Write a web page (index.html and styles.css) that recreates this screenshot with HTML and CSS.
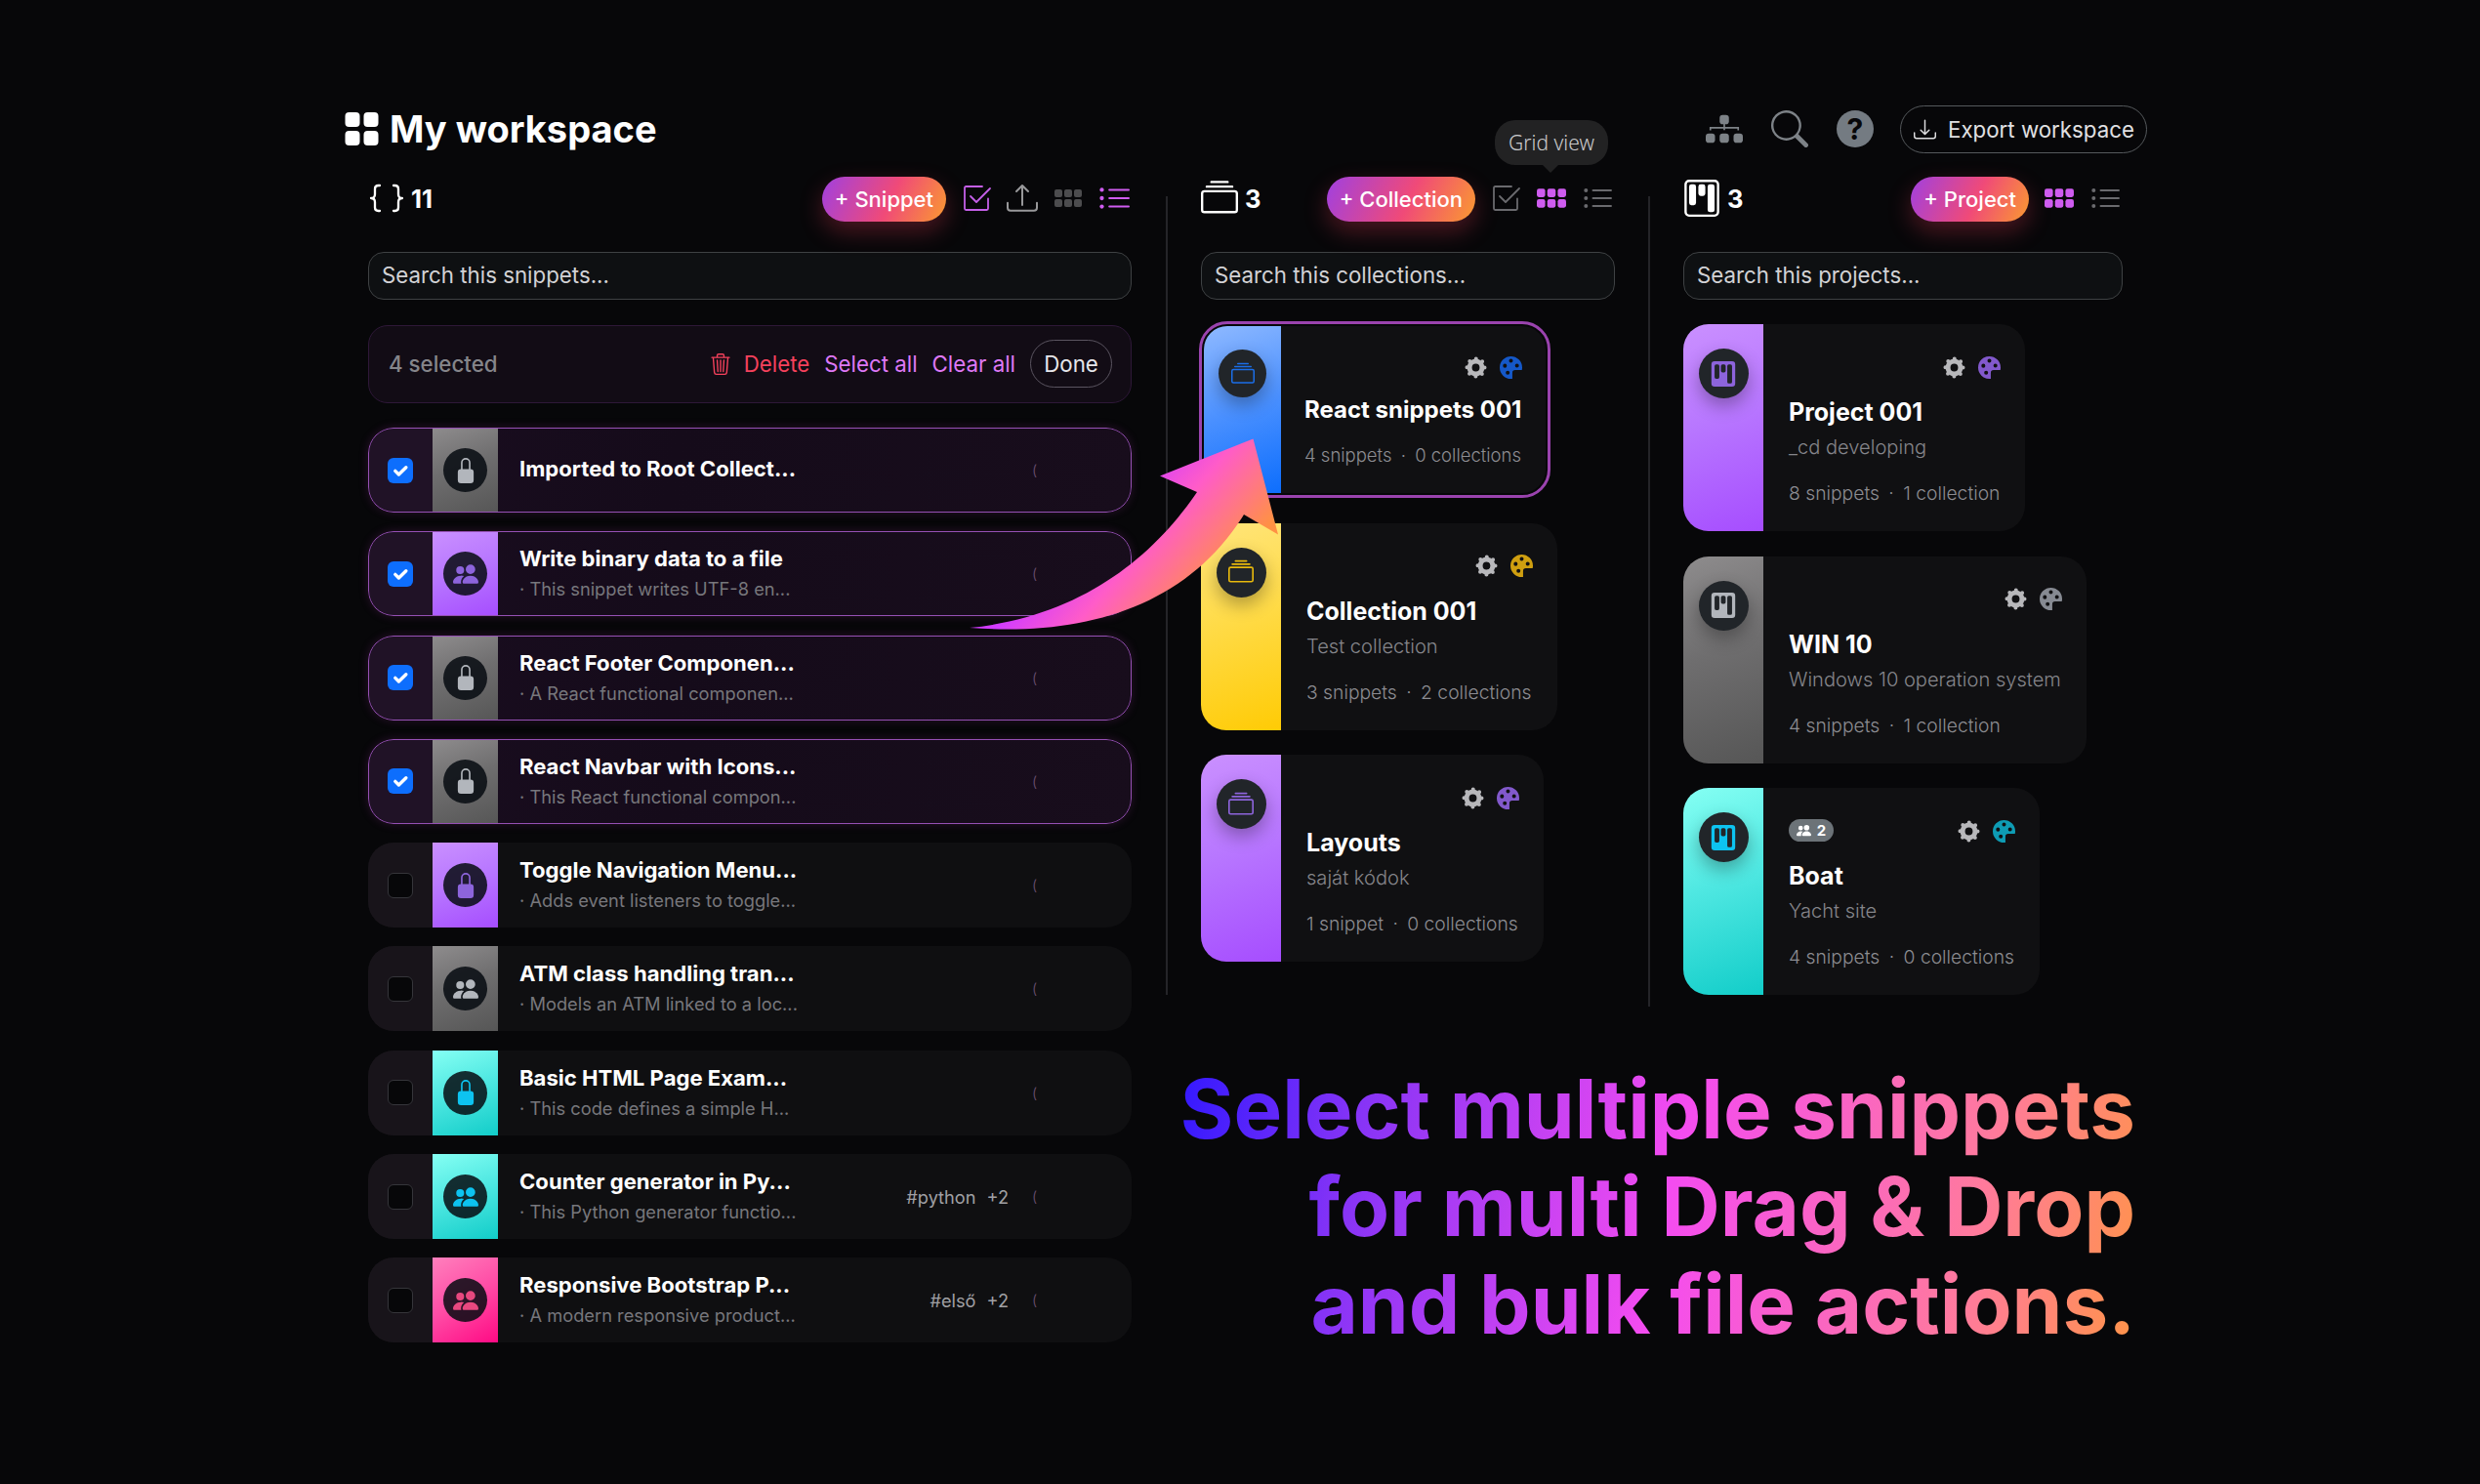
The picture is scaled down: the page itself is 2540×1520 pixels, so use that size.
FILE: index.html
```html
<!DOCTYPE html>
<html lang="en">
<head>
    <meta charset="UTF-8">
    <meta name="viewport" content="width=device-width, initial-scale=1.0">
    <title>My workspace</title>
    <link rel="stylesheet" href="styles.css">
</head>
<body>
    <!-- icon sprite -->
    <svg class="sprite" aria-hidden="true">
        <symbol id="i-people" viewBox="0 0 16 16"><path d="M7 14s-1 0-1-1 1-4 5-4 5 3 5 4-1 1-1 1zm4-6a3 3 0 1 0 0-6 3 3 0 0 0 0 6m-5.784 6A2.24 2.24 0 0 1 5 13c0-1.355.68-2.75 1.936-3.72A6.3 6.3 0 0 0 5 9c-4 0-5 3-5 4s1 1 1 1zM4.5 8a2.5 2.5 0 1 0 0-5 2.5 2.5 0 0 0 0 5"/></symbol>
        <symbol id="i-lock" viewBox="0 0 16 16"><path d="M8 1a2 2 0 0 1 2 2v4H6V3a2 2 0 0 1 2-2m3 6V3a3 3 0 0 0-6 0v4a2 2 0 0 0-2 2v5a2 2 0 0 0 2 2h6a2 2 0 0 0 2-2V9a2 2 0 0 0-2-2"/></symbol>
        <symbol id="i-palette" viewBox="0 0 16 16"><path fill-rule="evenodd" d="M8 0a8 8 0 1 0 0 16h1v-4.200a2 2 0 0 1 2-2h4.800Q16 9 16 8a8 8 0 0 0-8-8M8 1.800a1.400 1.400 0 1 1 0 2.800 1.400 1.400 0 0 1 0-2.800M3.700 5.300a1.400 1.400 0 1 1 0 2.800 1.400 1.400 0 0 1 0-2.800M12.300 5.200a1.400 1.400 0 1 1 0 2.800 1.400 1.400 0 0 1 0-2.800M5.700 10.200a1.400 1.400 0 1 1 0 2.800 1.400 1.400 0 0 1 0-2.800"/></symbol>
        <symbol id="i-gear" viewBox="0 0 24 24"><g fill="none" stroke="currentColor"><circle cx="12" cy="12" r="6.700" stroke-width="5.200"/><circle cx="12" cy="12" r="9.400" stroke-width="4.200" stroke-linecap="round" stroke-dasharray="0 7.383"/></g></symbol>
        <symbol id="i-kanban" viewBox="0 0 16 16"><path d="M13.500 1a1 1 0 0 1 1 1v12a1 1 0 0 1-1 1h-11a1 1 0 0 1-1-1V2a1 1 0 0 1 1-1zm-11-1a2 2 0 0 0-2 2v12a2 2 0 0 0 2 2h11a2 2 0 0 0 2-2V2a2 2 0 0 0-2-2z"/><path d="M6.500 3a1 1 0 0 1 1-1h1a1 1 0 0 1 1 1v3a1 1 0 0 1-1 1h-1a1 1 0 0 1-1-1zm-4 0a1 1 0 0 1 1-1h1a1 1 0 0 1 1 1v7a1 1 0 0 1-1 1h-1a1 1 0 0 1-1-1zm8 0a1 1 0 0 1 1-1h1a1 1 0 0 1 1 1v10a1 1 0 0 1-1 1h-1a1 1 0 0 1-1-1z"/></symbol>
        <symbol id="i-kanban-fill" viewBox="0 0 16 16"><path d="M2.500 0a2 2 0 0 0-2 2v12a2 2 0 0 0 2 2h11a2 2 0 0 0 2-2V2a2 2 0 0 0-2-2zm5 2h1a1 1 0 0 1 1 1v3a1 1 0 0 1-1 1h-1a1 1 0 0 1-1-1V3a1 1 0 0 1 1-1m-5 1a1 1 0 0 1 1-1h1a1 1 0 0 1 1 1v7a1 1 0 0 1-1 1h-1a1 1 0 0 1-1-1zm9-1h1a1 1 0 0 1 1 1v10a1 1 0 0 1-1 1h-1a1 1 0 0 1-1-1V3a1 1 0 0 1 1-1"/></symbol>
        <symbol id="i-collection" viewBox="0 0 16 16"><path d="M2.500 3.500a.5.5 0 0 1 0-1h11a.5.5 0 0 1 0 1zm2-2a.5.5 0 0 1 0-1h7a.5.5 0 0 1 0 1zM0 13a1.500 1.500 0 0 0 1.500 1.500h13A1.500 1.500 0 0 0 16 13V6a1.500 1.500 0 0 0-1.500-1.500h-13A1.500 1.500 0 0 0 0 6zm1.500.5A.5.5 0 0 1 1 13V6a.5.5 0 0 1 .5-.5h13a.5.5 0 0 1 .5.5v7a.5.5 0 0 1-.5.5z"/></symbol>
        <symbol id="i-check" viewBox="0 0 16 16"><g fill="none" stroke="currentColor" stroke-width=".9" stroke-linecap="round" stroke-linejoin="round"><path d="M11 2H2.700a.7.7 0 0 0-.7.700v10.600a.7.7 0 0 0 .7.700h10.600a.7.7 0 0 0 .7-.7V8.200"/><path d="m5 7 3 3 7-7"/></g></symbol>
        <symbol id="i-upload" viewBox="0 0 16 16"><path d="M.5 9.900a.5.5 0 0 1 .5.500v2.500a1 1 0 0 0 1 1h12a1 1 0 0 0 1-1v-2.500a.5.5 0 0 1 1 0v2.500a2 2 0 0 1-2 2H2a2 2 0 0 1-2-2v-2.500a.5.5 0 0 1 .5-.5"/><path d="M7.646 1.146a.5.5 0 0 1 .708 0l3 3a.5.5 0 0 1-.708.708L8.500 2.707V11.500a.5.5 0 0 1-1 0V2.707L5.354 4.854a.5.5 0 1 1-.708-.708z"/></symbol>
        <symbol id="i-download" viewBox="0 0 16 16"><path d="M.5 9.900a.5.5 0 0 1 .5.500v2.500a1 1 0 0 0 1 1h12a1 1 0 0 0 1-1v-2.500a.5.5 0 0 1 1 0v2.500a2 2 0 0 1-2 2H2a2 2 0 0 1-2-2v-2.500a.5.5 0 0 1 .5-.5"/><path d="M7.646 11.854a.5.5 0 0 0 .708 0l3-3a.5.5 0 0 0-.708-.708L8.500 10.293V1.500a.5.5 0 0 0-1 0v8.793L5.354 8.146a.5.5 0 1 0-.708.708z"/></symbol>
        <symbol id="i-grid" viewBox="0 0 32 32"><rect x="2" y="7" width="8" height="8" rx="2"/><rect x="12" y="7" width="8" height="8" rx="2"/><rect x="22" y="7" width="8" height="8" rx="2"/><rect x="2" y="17" width="8" height="8" rx="2"/><rect x="12" y="17" width="8" height="8" rx="2"/><rect x="22" y="17" width="8" height="8" rx="2"/></symbol>
        <symbol id="i-list" viewBox="0 0 32 32"><circle cx="4.300" cy="8" r="2"/><circle cx="4.300" cy="16" r="2"/><circle cx="4.300" cy="24" r="2"/><path d="M11.500 8H30M11.500 16H30M11.500 24H30" fill="none" stroke="currentColor" stroke-width="1.900" stroke-linecap="round"/></symbol>
        <symbol id="i-trash" viewBox="0 0 16 16"><path d="M6.500 1h3a.5.5 0 0 1 .5.500v1H6v-1a.5.5 0 0 1 .5-.5M11 2.500v-1A1.500 1.500 0 0 0 9.500 0h-3A1.500 1.500 0 0 0 5 1.500v1H1.500a.5.5 0 0 0 0 1h.538l.853 10.660A2 2 0 0 0 4.885 16h6.230a2 2 0 0 0 1.994-1.840l.853-10.660h.538a.5.5 0 0 0 0-1zm1.958 1-.846 10.580a1 1 0 0 1-.997.920h-6.230a1 1 0 0 1-.997-.920L3.042 3.500zm-7.487 1a.5.5 0 0 1 .528.470l.5 8.500a.5.5 0 0 1-.998.060L5 5.030a.5.5 0 0 1 .470-.530Zm5.058 0a.5.5 0 0 1 .470.530l-.5 8.500a.5.5 0 1 1-.998-.060l.5-8.500a.5.5 0 0 1 .528-.470M8 4.500a.5.5 0 0 1 .5.500v8.500a.5.5 0 0 1-1 0V5a.5.5 0 0 1 .5-.5"/></symbol>
        <symbol id="i-search" viewBox="0 0 16 16"><path d="M11.742 10.344a6.500 6.500 0 1 0-1.397 1.398h-.001q.044.060.098.115l3.850 3.850a1 1 0 0 0 1.415-1.414l-3.850-3.850a1 1 0 0 0-.115-.1zM12 6.500a5.500 5.500 0 1 1-11 0 5.500 5.500 0 0 1 11 0"/></symbol>
        <symbol id="i-diagram" viewBox="0 0 16 16"><rect x="6" y="2" width="4" height="4" rx="1.300"/><rect x="0" y="10" width="4" height="4" rx="1.300"/><rect x="6" y="10" width="4" height="4" rx="1.300"/><rect x="12" y="10" width="4" height="4" rx="1.300"/><path d="M8 5v3.500M2 8.600V7.500h12v1.100" fill="none" stroke="currentColor" stroke-width=".7"/></symbol>
        <symbol id="i-logo" viewBox="0 0 34 34"><rect width="15" height="15" rx="4"/><rect x="19" width="15" height="15" rx="4"/><rect y="19" width="15" height="15" rx="4"/><rect x="19" y="19" width="15" height="15" rx="4"/></symbol>
        <symbol id="i-braces" viewBox="0 0 36 30"><path d="M12 2H10.500Q7 2 7 5.500V11Q7 15 3 15Q7 15 7 19V24.500Q7 28 10.500 28H12M26 2h1.500Q31 2 31 5.500V11Q31 15 35 15Q31 15 31 19V24.500Q31 28 27.500 28H26" fill="none" stroke="currentColor" stroke-width="2.300" stroke-linecap="round" stroke-linejoin="round"/></symbol>
        <symbol id="i-tick" viewBox="0 0 20 20"><path d="m6 10.300 2.800 2.800 5.700-5.600" fill="none" stroke="currentColor" stroke-width="2.600" stroke-linecap="round" stroke-linejoin="round"/></symbol>
    </svg>

    <div class="workspace">
        <header class="header">
            <svg class="logo"><use href="#i-logo"/></svg>
            <h1>My workspace</h1>
            <div class="header-actions">
                <svg class="header-icon"><use href="#i-diagram"/></svg>
                <svg class="header-icon"><use href="#i-search"/></svg>
                <span class="help">?</span>
                <button class="export"><svg><use href="#i-download"/></svg>Export workspace</button>
            </div>
        </header>

        <div class="board">
            <section class="column snippets">
                <div class="toolbar">
                    <svg class="type-icon braces"><use href="#i-braces"/></svg>
                    <span class="count">11</span>
                    <button class="add">+ Snippet</button>
                    <svg class="tool active-line"><use href="#i-check"/></svg>
                    <svg class="tool light"><use href="#i-upload"/></svg>
                    <svg class="tool dim"><use href="#i-grid"/></svg>
                    <svg class="tool active"><use href="#i-list"/></svg>
                </div>
                <div class="search">Search this snippets...</div>

                <div class="bulk-bar">
                    <span class="selected-count">4 selected</span>
                    <span class="bulk-delete"><svg><use href="#i-trash"/></svg>Delete</span>
                    <span class="bulk-link">Select all</span>
                    <span class="bulk-link">Clear all</span>
                    <button class="done">Done</button>
                </div>

                <div class="rows">
                    <div class="row selected">
                        <div class="pick"><span class="box checked"><svg><use href="#i-tick"/></svg></span></div>
                        <div class="strip gray"><span class="badge"><svg><use href="#i-lock"/></svg></span></div>
                        <div class="info"><h3>Imported to Root Collect...</h3></div>
                        <div class="tags"></div><span class="edge">(</span>
                    </div>
                    <div class="row selected">
                        <div class="pick"><span class="box checked"><svg><use href="#i-tick"/></svg></span></div>
                        <div class="strip purple"><span class="badge"><svg><use href="#i-people"/></svg></span></div>
                        <div class="info"><h3>Write binary data to a file</h3><p>· This snippet writes UTF-8 en...</p></div>
                        <div class="tags"></div><span class="edge">(</span>
                    </div>
                    <div class="row selected">
                        <div class="pick"><span class="box checked"><svg><use href="#i-tick"/></svg></span></div>
                        <div class="strip gray"><span class="badge"><svg><use href="#i-lock"/></svg></span></div>
                        <div class="info"><h3>React Footer Componen...</h3><p>· A React functional componen...</p></div>
                        <div class="tags"></div><span class="edge">(</span>
                    </div>
                    <div class="row selected">
                        <div class="pick"><span class="box checked"><svg><use href="#i-tick"/></svg></span></div>
                        <div class="strip gray"><span class="badge"><svg><use href="#i-lock"/></svg></span></div>
                        <div class="info"><h3>React Navbar with Icons...</h3><p>· This React functional compon...</p></div>
                        <div class="tags"></div><span class="edge">(</span>
                    </div>
                    <div class="row">
                        <div class="pick"><span class="box"></span></div>
                        <div class="strip purple"><span class="badge"><svg><use href="#i-lock"/></svg></span></div>
                        <div class="info"><h3>Toggle Navigation Menu...</h3><p>· Adds event listeners to toggle...</p></div>
                        <div class="tags"></div><span class="edge">(</span>
                    </div>
                    <div class="row">
                        <div class="pick"><span class="box"></span></div>
                        <div class="strip gray"><span class="badge"><svg><use href="#i-people"/></svg></span></div>
                        <div class="info"><h3>ATM class handling tran...</h3><p>· Models an ATM linked to a loc...</p></div>
                        <div class="tags"></div><span class="edge">(</span>
                    </div>
                    <div class="row">
                        <div class="pick"><span class="box"></span></div>
                        <div class="strip cyan"><span class="badge"><svg><use href="#i-lock"/></svg></span></div>
                        <div class="info"><h3>Basic HTML Page Exam...</h3><p>· This code defines a simple H...</p></div>
                        <div class="tags"></div><span class="edge">(</span>
                    </div>
                    <div class="row">
                        <div class="pick"><span class="box"></span></div>
                        <div class="strip cyan"><span class="badge"><svg><use href="#i-people"/></svg></span></div>
                        <div class="info"><h3>Counter generator in Py...</h3><p>· This Python generator functio...</p></div>
                        <div class="tags"><span>#python</span><span>+2</span></div><span class="edge">(</span>
                    </div>
                    <div class="row">
                        <div class="pick"><span class="box"></span></div>
                        <div class="strip pink"><span class="badge"><svg><use href="#i-people"/></svg></span></div>
                        <div class="info"><h3>Responsive Bootstrap P...</h3><p>· A modern responsive product...</p></div>
                        <div class="tags"><span>#első</span><span>+2</span></div><span class="edge">(</span>
                    </div>
                </div>
            </section>

            <div class="divider"></div>

            <div class="side">
                <div class="side-columns">
                    <section class="column collections">
                        <div class="toolbar">
                            <svg class="type-icon"><use href="#i-collection"/></svg>
                            <span class="count">3</span>
                            <button class="add">+ Collection</button>
                            <svg class="tool"><use href="#i-check"/></svg>
                            <span class="tool-wrap">
                                <svg class="tool active"><use href="#i-grid"/></svg>
                                <span class="tooltip">Grid view</span>
                            </span>
                            <svg class="tool"><use href="#i-list"/></svg>
                        </div>
                        <div class="search">Search this collections...</div>

                        <div class="cards">
                            <article class="card drop-target">
                                <div class="strip blue"><span class="badge"><svg><use href="#i-collection"/></svg></span></div>
                                <div class="card-body">
                                    <div class="card-tools blue"><svg class="gear"><use href="#i-gear"/></svg><svg><use href="#i-palette"/></svg></div>
                                    <h2>React snippets 001</h2>
                                    <p class="meta">4 snippets <i>·</i> 0 collections</p>
                                </div>
                            </article>
                            <article class="card">
                                <div class="strip yellow"><span class="badge"><svg><use href="#i-collection"/></svg></span></div>
                                <div class="card-body">
                                    <div class="card-tools yellow"><svg class="gear"><use href="#i-gear"/></svg><svg><use href="#i-palette"/></svg></div>
                                    <h2>Collection 001</h2>
                                    <p class="desc">Test collection</p>
                                    <p class="meta">3 snippets <i>·</i> 2 collections</p>
                                </div>
                            </article>
                            <article class="card">
                                <div class="strip purple"><span class="badge"><svg><use href="#i-collection"/></svg></span></div>
                                <div class="card-body">
                                    <div class="card-tools purple"><svg class="gear"><use href="#i-gear"/></svg><svg><use href="#i-palette"/></svg></div>
                                    <h2>Layouts</h2>
                                    <p class="desc">saját kódok</p>
                                    <p class="meta">1 snippet <i>·</i> 0 collections</p>
                                </div>
                            </article>
                        </div>
                    </section>

                    <div class="divider tall"></div>

                    <section class="column projects">
                        <div class="toolbar">
                            <svg class="type-icon"><use href="#i-kanban"/></svg>
                            <span class="count">3</span>
                            <button class="add">+ Project</button>
                            <svg class="tool active"><use href="#i-grid"/></svg>
                            <svg class="tool"><use href="#i-list"/></svg>
                        </div>
                        <div class="search">Search this projects...</div>

                        <div class="cards">
                            <article class="card">
                                <div class="strip purple"><span class="badge"><svg><use href="#i-kanban-fill"/></svg></span></div>
                                <div class="card-body">
                                    <div class="card-tools purple"><svg class="gear"><use href="#i-gear"/></svg><svg><use href="#i-palette"/></svg></div>
                                    <h2>Project 001</h2>
                                    <p class="desc">_cd developing</p>
                                    <p class="meta">8 snippets <i>·</i> 1 collection</p>
                                </div>
                            </article>
                            <article class="card">
                                <div class="strip gray"><span class="badge"><svg><use href="#i-kanban-fill"/></svg></span></div>
                                <div class="card-body">
                                    <div class="card-tools gray"><svg class="gear"><use href="#i-gear"/></svg><svg><use href="#i-palette"/></svg></div>
                                    <h2>WIN 10</h2>
                                    <p class="desc">Windows 10 operation system</p>
                                    <p class="meta">4 snippets <i>·</i> 1 collection</p>
                                </div>
                            </article>
                            <article class="card">
                                <div class="strip cyan"><span class="badge"><svg><use href="#i-kanban-fill"/></svg></span></div>
                                <div class="card-body">
                                    <div class="card-tools cyan"><span class="members"><svg><use href="#i-people"/></svg>2</span><svg class="gear"><use href="#i-gear"/></svg><svg><use href="#i-palette"/></svg></div>
                                    <h2>Boat</h2>
                                    <p class="desc">Yacht site</p>
                                    <p class="meta">4 snippets <i>·</i> 0 collections</p>
                                </div>
                            </article>
                        </div>
                    </section>
                </div>

                <p class="headline">Select multiple snippets<br>for multi Drag &amp; Drop<br>and bulk file actions.</p>
            </div>
        </div>

        <!-- drag arrow, runs from the selected rows to the target collection -->
        <svg class="drag-arrow" viewBox="990 445 325 205">
            <defs>
                <linearGradient id="arrow-fill" gradientUnits="userSpaceOnUse" x1="1165" y1="478" x2="1271" y2="571">
                    <stop offset="0" stop-color="#d23cff"/>
                    <stop offset=".42" stop-color="#ff5cc8"/>
                    <stop offset="1" stop-color="#ff9144"/>
                </linearGradient>
            </defs>
            <path fill="url(#arrow-fill)" d="M1283.500 449.500 1188 487.500 1226 504C1180 572 1105 632 993 643C1110 652 1215 622 1274 527L1309 547.500Z"/>
        </svg>
    </div>
</body>
</html>
```

FILE: styles.css
```css
* {
    box-sizing: border-box;
}
body {
    margin: 0;
    background-color: #070709;
    color: #fff;
    font-family: Inter, sans-serif;
    font-size: 22px;
}
h1, h2, h3, p {
    margin: 0;
}
svg {
    fill: currentColor;
    flex-shrink: 0;
}
button {
    font-family: inherit;
    font-size: 22px;
    color: #fff;
    background: none;
    padding: 0;
    flex-shrink: 0;
    white-space: nowrap;
}
.sprite {
    display: none;
}
.workspace {
    position: relative;
    width: 2540px;
    height: 1520px;
    padding: 108px 341px 0 353px;
    overflow: hidden;
}

/* header */
.header {
    display: flex;
    align-items: center;
    height: 48px;
}
.logo {
    width: 35px;
    height: 34px;
}
h1 {
    margin-left: 11px;
    font-size: 38px;
    font-weight: 700;
    line-height: 48px;
}
.header-actions {
    display: flex;
    align-items: center;
    gap: 29px;
    margin-left: auto;
    color: #7d8287;
}
.header-icon {
    width: 38px;
    height: 38px;
}
.help {
    width: 38px;
    height: 38px;
    margin-right: -2px;
    border-radius: 50%;
    background-color: #747b82;
    color: #070709;
    font-size: 30px;
    font-weight: 700;
    line-height: 38px;
    text-align: center;
}
.export {
    display: flex;
    align-items: center;
    gap: 12px;
    width: 253px;
    height: 49px;
    padding-left: 13px;
    border: 1px solid #55595c;
    border-radius: 25px;
    color: #e0e0e2;
    font-size: 22.3px;
    font-weight: 380;
}
.export svg {
    width: 23px;
    height: 23px;
}

/* columns */
.board {
    display: flex;
    margin-top: 25px;
    padding-left: 24px;
}
.snippets {
    width: 782px;
}
.collections {
    width: 424px;
}
.projects {
    width: 450px;
}
.divider {
    width: 2px;
    height: 818px;
    margin: 20px 34px 0 35px;
    background-color: #242428;
}
.divider.tall {
    height: 830px;
    margin-left: 34px;
}
.side {
    display: flex;
    flex-direction: column;
    width: 957px;
}
.side-columns {
    display: flex;
    height: 905px;
}
.toolbar {
    display: flex;
    align-items: center;
    gap: 15px;
    height: 46px;
    padding-right: 2px;
}
.type-icon {
    width: 38px;
    height: 38px;
    margin-top: -3px;
}
.type-icon.braces {
    width: 36px;
    height: 30px;
}
.count {
    margin: -2px 0 0 -8px;
    font-size: 25.5px;
    font-weight: 700;
}
.snippets .count {
    margin-left: -7px;
}
.add {
    height: 46px;
    margin-left: auto;
    padding: 0 13px 1px;
    border: none;
    border-radius: 23px;
    background: linear-gradient(115deg, #a040e0 0%, #f04a78 55%, #fa9a30 100%);
    box-shadow: 0 10px 24px rgba(240, 60, 90, 0.3);
    font-size: 22px;
    font-weight: 450;
}
.tool {
    width: 32px;
    height: 32px;
    margin-top: -3px;
    color: #6a6a6e;
}
.tool.light {
    color: #98989a;
}
.tool.dim {
    color: #4c4c4e;
}
.tool.active-line {
    color: #c45fe8;
}
.tool.active {
    color: #cf5cf0;
    transform: scale(1.07);
}
.tool-wrap {
    position: relative;
    display: flex;
}
.tooltip {
    position: absolute;
    left: -42px;
    bottom: 50px;
    width: 116px;
    height: 46px;
    border-radius: 21px;
    background-color: #222223;
    color: #cacacc;
    font-family: "Noto Sans", sans-serif;
    font-size: 21px;
    font-weight: 350;
    line-height: 46px;
    text-align: center;
    white-space: nowrap;
}
.tooltip::after {
    content: "";
    position: absolute;
    left: 49px;
    top: 100%;
    border: 8px solid transparent;
    border-top-color: #222223;
    border-bottom: none;
}
.search {
    height: 49px;
    margin-top: 31px;
    padding-left: 13px;
    border: 1px solid #3e4143;
    border-radius: 16px;
    background-color: #0e1012;
    color: #d2d2d5;
    font-size: 22.3px;
    font-weight: 380;
    line-height: 46px;
}

/* bulk actions */
.bulk-bar {
    display: flex;
    align-items: center;
    gap: 15px;
    height: 80px;
    margin-top: 26px;
    padding: 0 19px 1px 20px;
    border: 1px solid #2e1838;
    border-radius: 20px;
    background-color: #120c15;
    font-size: 22.3px;
    font-weight: 380;
}
.selected-count {
    margin-right: auto;
    color: #85858a;
    font-weight: 500;
}
.bulk-delete {
    display: flex;
    align-items: center;
    gap: 13px;
    color: #f5415c;
}
.bulk-delete svg {
    width: 22px;
    height: 22px;
}
.bulk-link {
    color: #de78f5;
}
.done {
    width: 84px;
    height: 49px;
    border: 1px solid #5a5460;
    border-radius: 25px;
    color: #e6e6ea;
    font-size: 22.3px;
    font-weight: 400;
}

/* snippet rows */
.rows {
    display: flex;
    flex-direction: column;
    gap: 19.3px;
    margin-top: 25px;
}
.row {
    position: relative;
    display: flex;
    align-items: center;
    height: 87px;
    border-radius: 26px;
    background-color: #0f0f11;
    overflow: hidden;
}
.row.selected {
    background: linear-gradient(100deg, #1a0d20, #150b1a 40%, #180d1c);
    box-shadow: 0 0 10px rgba(120, 40, 120, 0.3);
}
/* the border runs over the coloured strip's edge */
.row.selected::after {
    content: "";
    position: absolute;
    inset: 0;
    border: 1px solid #9550b4;
    border-radius: 26px;
}
.pick {
    display: flex;
    align-items: center;
    width: 66px;
    height: 100%;
    padding-left: 20px;
    background-color: #18141a;
}
.selected .pick {
    background-color: #201226;
}
.box {
    width: 26px;
    height: 26px;
    border: 1px solid #35353a;
    border-radius: 6px;
    background-color: #070709;
}
.box.checked {
    border: none;
    background-color: #0d6efd;
}
.box svg {
    display: block;
    width: 26px;
    height: 26px;
}
.strip {
    display: flex;
    flex-shrink: 0;
    color: #8d64dc;
}
.strip.purple { background: linear-gradient(160deg, #ca90ff, #b877ff 45%, #a64dff); }
.strip.gray { background: linear-gradient(160deg, #8e8c8d, #6f6e6f 45%, #565656); color: #b2b6bc; }
.strip.cyan { background: linear-gradient(160deg, #85fff3, #50e8e2 45%, #12cdc9); color: #0dc3f0; }
.strip.pink { background: linear-gradient(150deg, #ff80bd, #ff4ba5 50%, #ff0a84); color: #e8487f; }
.strip.blue { background: linear-gradient(160deg, #8fb9ff, #4a90ff 50%, #0d6efd); color: #1b6ee8; }
.strip.yellow { background: linear-gradient(160deg, #ffe57c, #ffdb48 45%, #ffcb05); color: #e8b90c; }
.row .strip {
    align-items: center;
    justify-content: center;
    width: 67px;
    height: 100%;
}
.badge {
    display: flex;
    align-items: center;
    justify-content: center;
    border-radius: 50%;
    background-color: #212529;
}
.row .badge {
    width: 45px;
    height: 45px;
    background-color: rgba(6, 10, 16, 0.85);
}
.badge svg {
    width: 26px;
    height: 26px;
}
.info {
    width: 311px;
    padding-left: 22px;
    white-space: nowrap;
}
.info h3 {
    font-size: 22.1px;
    font-weight: 700;
    line-height: 30px;
}
.info h3:only-child {
    padding-bottom: 4px;
}
.info p {
    margin-top: 1px;
    color: #77777c;
    font-size: 18.3px;
    font-weight: 400;
    line-height: 30px;
}
.tags {
    display: flex;
    justify-content: flex-end;
    gap: 11px;
    width: 212px;
    color: #a0a0a4;
    font-size: 18.2px;
    font-weight: 400;
}
.edge {
    margin-left: 24px;
    color: #6e5274;
    font-size: 15px;
    font-weight: 300;
}

/* cards */
.cards {
    display: flex;
    flex-direction: column;
    align-items: flex-start;
    gap: 25.5px;
    margin-top: 25px;
}
.card {
    display: flex;
    height: 212px;
    border-radius: 26px;
    background-color: #101012;
    overflow: hidden;
}
.card .strip {
    justify-content: center;
    width: 82px;
    padding-top: 25px;
}
.card .badge {
    width: 51px;
    height: 51px;
    box-shadow: 0 8px 18px rgba(0, 0, 0, 0.3);
}
.card-body {
    padding: 32px 26px 0;
    white-space: nowrap;
}
.card-tools {
    display: flex;
    align-items: center;
    justify-content: flex-end;
    gap: 13px;
    height: 24px;
    margin-right: -1px;
}
.card-tools svg {
    width: 23px;
    height: 23px;
}
.card-tools .gear {
    color: #b8b8bb;
}
.card-tools.blue { color: #1558c8; }
.card-tools.yellow { color: #cf9f10; }
.card-tools.purple { color: #8259cc; }
.card-tools.gray { color: #868a92; }
.card-tools.cyan { color: #0e9cb4; }
.members {
    display: flex;
    align-items: center;
    justify-content: center;
    gap: 6px;
    width: 46px;
    height: 23px;
    margin: -2px auto 0 0;
    border-radius: 12px;
    background-color: #6c7378;
    color: #fff;
    font-size: 15px;
    font-weight: 700;
}
.card-tools .members svg {
    width: 15px;
    height: 15px;
}
h2 {
    margin-top: 17px;
    font-size: 25px;
    font-weight: 700;
    line-height: 34px;
}
.desc {
    margin-top: 5px;
    color: #85858a;
    font-size: 20.1px;
    font-weight: 300;
    line-height: 28px;
}
.meta {
    margin-top: 19px;
    color: #8c8c91;
    font-size: 19.3px;
    font-weight: 300;
    line-height: 28px;
}
.meta i {
    margin: 0 4px;
    font-style: normal;
}
/* collection under the pointer, drawn slightly smaller inside an outline */
.drop-target {
    height: 171px;
    margin: 2px 0 5px 3px;
    border-radius: 24px;
    outline: 3px solid #9a43ae;
    outline-offset: 2px;
}
.drop-target .strip {
    width: 79px;
    padding-top: 24px;
}
.drop-target .badge {
    width: 49px;
    height: 49px;
}
.drop-target .badge svg {
    width: 24px;
    height: 24px;
}
.drop-target .card-body {
    padding: 30px 25px 0 24px;
}
.drop-target h2 {
    margin-top: 15px;
    font-size: 24px;
}
.drop-target .meta {
    margin-top: 15px;
    font-size: 18.5px;
}

/* headline */
.headline {
    align-self: flex-end;
    background: linear-gradient(100deg, #3218ff 0%, #8433f6 18%, #f44cf0 51%, #ff7a9c 82%, #ff9448 100%);
    background-clip: text;
    -webkit-background-clip: text;
    color: transparent;
    font-size: 83.4px;
    font-weight: 700;
    line-height: 100px;
    text-align: right;
    white-space: nowrap;
}

.drag-arrow {
    position: absolute;
    left: 990px;
    top: 445px;
    width: 325px;
    height: 205px;
}
```
